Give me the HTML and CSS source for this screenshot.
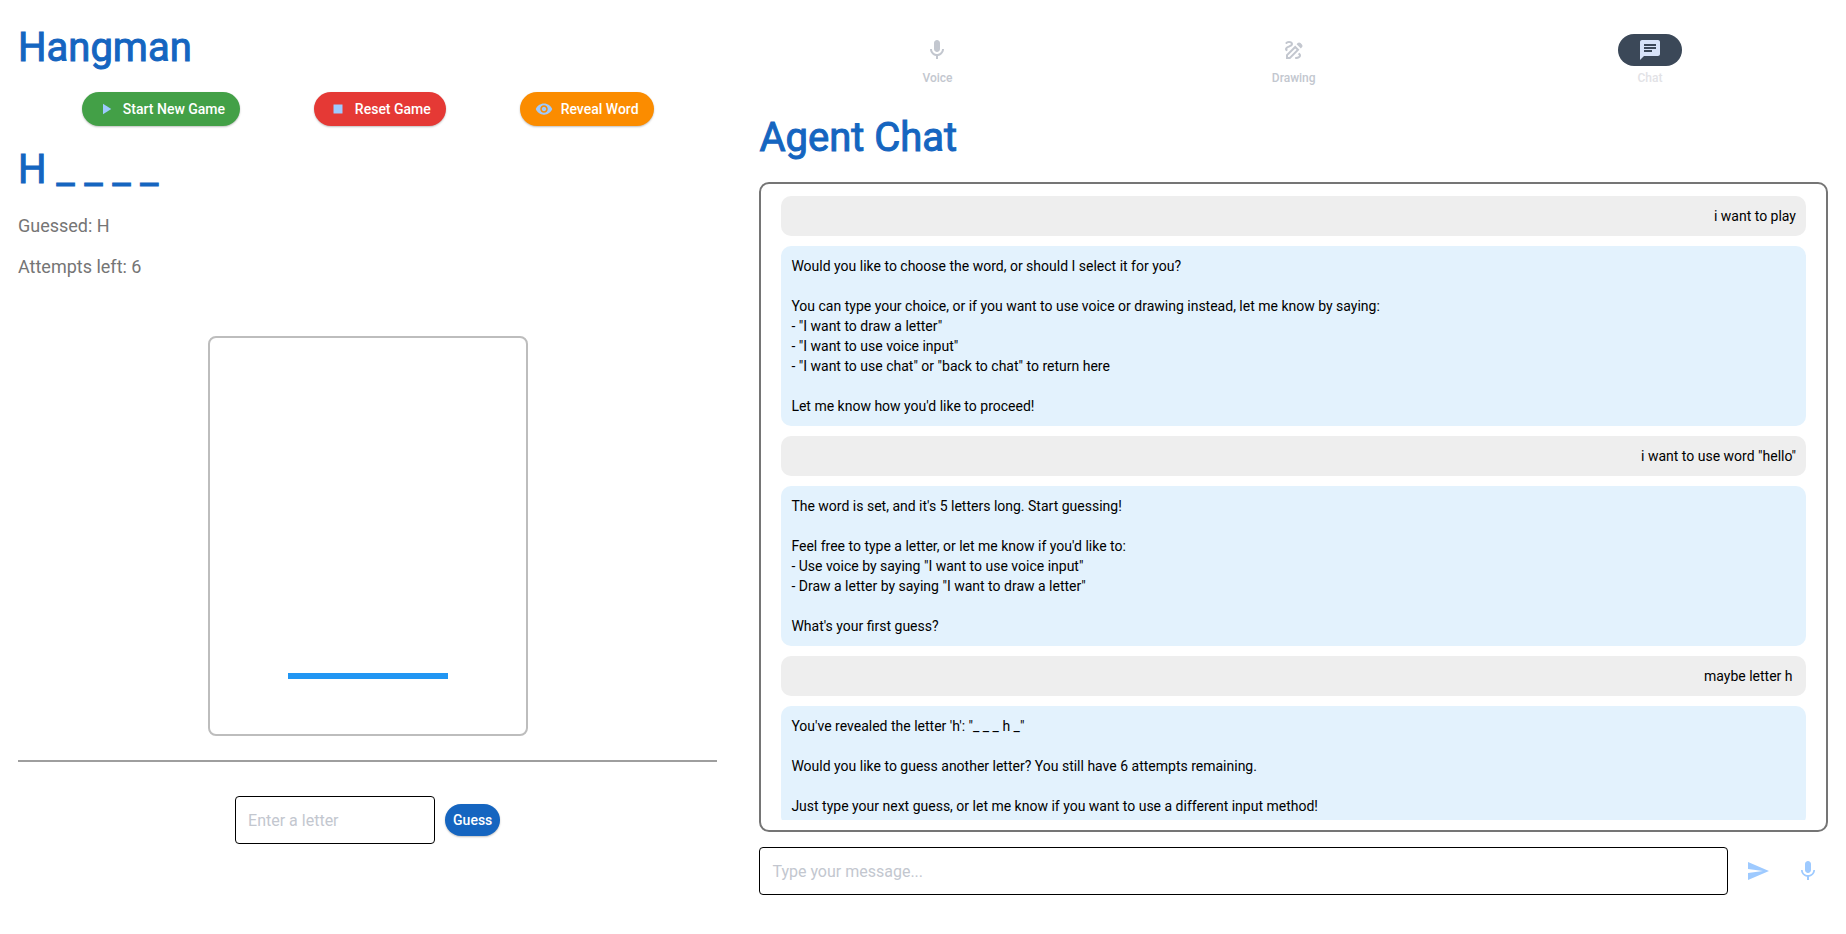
FILE: index.html
```html
<!DOCTYPE html>
<html lang="en">
<head>
<meta charset="utf-8">
<title>Hangman</title>
<link rel="stylesheet" href="styles.css">
</head>
<body>
<div class="layout">
  <main class="game">
    <h1 class="heading">Hangman</h1>
    <div class="actions">
      <button class="btn btn-start" type="button"><svg class="icon-small" viewBox="0 0 24 24" aria-hidden="true"><path d="M8 5v14l11-7z"/></svg>Start New Game</button>
      <button class="btn btn-reset" type="button"><svg class="icon-small" viewBox="0 0 24 24" aria-hidden="true"><path d="M6 6h12v12H6z"/></svg>Reset Game</button>
      <button class="btn btn-reveal" type="button"><svg class="icon-small" viewBox="0 0 24 24" aria-hidden="true"><path d="M12 4.500C7 4.500 2.730 7.610 1 12c1.730 4.390 6 7.500 11 7.500s9.270-3.110 11-7.500c-1.730-4.390-6-7.500-11-7.500zM12 17c-2.760 0-5-2.240-5-5s2.240-5 5-5 5 2.240 5 5-2.240 5-5 5zm0-8c-1.660 0-3 1.340-3 3s1.340 3 3 3 3-1.340 3-3-1.340-3-3-3z"/></svg>Reveal Word</button>
    </div>
    <p class="heading word">H _ _ _ _</p>
    <p class="status">Guessed: H</p>
    <p class="status">Attempts left: 6</p>
    <svg class="gallows" viewBox="0 0 316 396" role="img" aria-label="Gallows"><path d="M78 338h160" stroke="#2196f3" stroke-width="6"/></svg>
    <hr class="divider">
    <form class="guess">
      <input class="field guess-field" type="text" placeholder="Enter a letter" aria-label="Enter a letter">
      <button class="btn btn-guess" type="button">Guess</button>
    </form>
  </main>
  <section class="agent">
    <nav class="tabs">
      <button class="tab" type="button"><span class="tab-pill"><svg class="icon" viewBox="0 0 24 24" aria-hidden="true"><path d="M12 14c1.660 0 3-1.340 3-3V5c0-1.660-1.340-3-3-3S9 3.340 9 5v6c0 1.660 1.340 3 3 3zm5-3c0 2.760-2.240 5-5 5s-5-2.240-5-5H5c0 3.530 2.610 6.430 6 6.920V21h2v-3.080c3.390-.49 6-3.390 6-6.920h-2z"/></svg></span>Voice</button>
      <button class="tab" type="button"><span class="tab-pill"><svg class="icon" viewBox="0 0 24 24" aria-hidden="true"><path d="M18.850 10.390l1.060-1.060c.78-.78.78-2.050 0-2.830L18.500 5.090c-.78-.78-2.050-.78-2.830 0l-1.060 1.060 4.240 4.240zm-4.240 1.420L7.410 19H6v-1.410l7.190-7.190 1.420 1.410zm-1.420-4.250L4 16.760V21h4.240l9.190-9.190-4.240-4.250zM19 17.500c0 2.190-2.540 3.500-5 3.500-.55 0-1-.45-1-1s.45-1 1-1c1.540 0 3-.73 3-1.500 0-.47-.48-.87-1.230-1.200l1.480-1.480c1.070.63 1.750 1.470 1.750 2.680zM4.580 13.350C3.610 12.790 3 12.060 3 11c0-1.800 1.890-2.630 3.560-3.360C7.590 7.180 9 6.560 9 6c0-.41-.78-1-2-1-1.260 0-1.800.61-1.830.64-.35.41-.98.46-1.400.12-.41-.34-.49-.95-.15-1.380C3.730 4.240 4.760 3 7 3s4 1.320 4 3c0 1.870-1.930 2.720-3.640 3.470C6.420 9.880 5 10.500 5 11c0 .31.43.6 1.070.86l-1.490 1.490z"/></svg></span>Drawing</button>
      <button class="tab tab-active" type="button" aria-current="page"><span class="tab-pill"><svg class="icon" viewBox="0 0 24 24" aria-hidden="true"><path d="M20 2H4c-1.100 0-1.990.9-1.990 2L2 22l4-4h14c1.100 0 2-.9 2-2V4c0-1.100-.9-2-2-2zM6 9h12v2H6V9zm8 5H6v-2h8v2zm4-6H6V6h12v2z"/></svg></span>Chat</button>
    </nav>
    <h2 class="heading">Agent Chat</h2>
    <div class="chat">
      <div class="messages">
        <p class="message from-user">i want to play</p>
        <p class="message">Would you like to choose the word, or should I select it for you?

You can type your choice, or if you want to use voice or drawing instead, let me know by saying:
- "I want to draw a letter"
- "I want to use voice input"
- "I want to use chat" or "back to chat" to return here

Let me know how you'd like to proceed!</p>
        <p class="message from-user">i want to use word "hello"</p>
        <p class="message">The word is set, and it's 5 letters long. Start guessing!

Feel free to type a letter, or let me know if you'd like to:
- Use voice by saying "I want to use voice input"
- Draw a letter by saying "I want to draw a letter"

What's your first guess?</p>
        <p class="message from-user">maybe letter h </p>
        <p class="message">You've revealed the letter 'h': "_ _ _ h _"

Would you like to guess another letter? You still have 6 attempts remaining.

Just type your next guess, or let me know if you want to use a different input method!</p>
      </div>
    </div>
    <form class="composer">
      <input class="field message-field" type="text" placeholder="Type your message..." aria-label="Type your message">
      <button class="icon-btn" type="button" aria-label="Send"><svg class="icon" viewBox="0 0 24 24" aria-hidden="true"><path d="M2.010 21L23 12 2.010 3 2 10l15 2-15 2z"/></svg></button>
      <button class="icon-btn" type="button" aria-label="Record voice"><svg class="icon" viewBox="0 0 24 24" aria-hidden="true"><path d="M12 14c1.660 0 2.990-1.340 2.990-3L15 5c0-1.660-1.340-3-3-3S9 3.340 9 5v6c0 1.660 1.340 3 3 3zm5.300-3c0 3-2.540 5.100-5.300 5.100S6.700 14 6.700 11H5c0 3.410 2.720 6.230 6 6.720V21h2v-3.280c3.280-.48 6-3.300 6-6.720h-1.700z"/></svg></button>
    </form>
  </section>
</div>
</body>
</html>
```
FILE: styles.css
```css
* {
  box-sizing: border-box;
}

body {
  margin: 0;
  background: #fff;
  color: #1a1c1e;
  font-family: Roboto, "Liberation Sans", sans-serif;
  font-size: 14px;
  line-height: 20px;
}

h1, h2, p {
  margin: 0;
}

button, input {
  font: inherit;
}

button {
  border: 0;
  padding: 0;
  background: none;
  cursor: pointer;
}

svg {
  display: block;
  fill: currentColor;
}

.layout {
  display: grid;
  grid-template-columns: minmax(0, 2fr) minmax(0, 3fr);
  grid-template-rows: minmax(0, 1fr);
  height: 100vh;
}

.game {
  display: flex;
  flex-direction: column;
  padding: 22px 21px 0 18px;
}

.heading {
  color: #1565c0;
  font-size: 40px;
  font-weight: 400;
  line-height: 52px;
  -webkit-text-stroke: 1px currentColor;
}

.actions {
  display: flex;
  justify-content: space-evenly;
  gap: 10px;
  margin: 18px 0;
}

.btn {
  display: flex;
  align-items: center;
  gap: 8px;
  height: 34px;
  padding: 0 15px;
  border-radius: 17px;
  box-shadow: 0 1px 2px rgba(0, 0, 0, 0.25);
  color: #fff;
  font-weight: 500;
}

.btn-start {
  background: #43a047;
}

.btn-reset {
  background: #e53935;
}

.btn-reveal {
  background: #fb8c00;
}

.icon-small {
  width: 18px;
  height: 18px;
  color: #9ecaff;
}

.word {
  margin-bottom: 2px;
}

.status {
  margin-top: 15px;
  color: #757575;
  font-size: 18px;
  line-height: 26px;
}

.gallows {
  flex-shrink: 0;
  align-self: center;
  width: 320px;
  margin-top: 56px;
  border: 2px solid #bdbdbd;
  border-radius: 8px;
}

.divider {
  flex-shrink: 0;
  width: 100%;
  height: 2px;
  margin: 24px 0 34px;
  border: 0;
  background: #9e9e9e;
}

.guess {
  display: flex;
  justify-content: center;
  align-items: center;
  gap: 10px;
}

.field {
  height: 48px;
  padding: 0 12px;
  border: 1px solid #000;
  border-radius: 4px;
  background: transparent;
  font-size: 16px;
}

.field::placeholder {
  color: #c3c7cf;
  opacity: 1;
}

.guess-field {
  width: 200px;
}

.btn-guess {
  height: 32px;
  padding: 0 8px;
  background: #1565c0;
}

.agent {
  display: flex;
  flex-direction: column;
  padding: 34px 18px 39px 21px;
}

.tabs {
  display: grid;
  grid-template-columns: repeat(3, 1fr);
}

.tab {
  display: flex;
  flex-direction: column;
  align-items: center;
  gap: 4px;
  color: #c3c7cf;
  font-size: 12px;
  font-weight: 500;
  line-height: 16px;
}

.tab-pill {
  display: grid;
  place-items: center;
  width: 64px;
  height: 32px;
  border-radius: 16px;
}

.tab-active {
  color: #e2e2e6;
}

.tab-active .tab-pill {
  background: #3b4858;
  color: #d7e3f8;
}

.icon {
  width: 24px;
  height: 24px;
}

.agent > .heading {
  margin: 26px 0 18px;
}

.chat {
  display: flex;
  flex: 1;
  min-height: 0;
  padding: 12px 20px 10px;
  border: 2px solid #757575;
  border-radius: 10px;
}

.messages {
  flex: 1;
  overflow: auto;
  scrollbar-width: none;
}

.message {
  margin-bottom: 10px;
  padding: 10px;
  border-radius: 10px;
  background: #e3f2fd;
  color: #000;
  white-space: break-spaces;
}

.from-user {
  background: #eee;
  text-align: right;
}

.composer {
  display: flex;
  align-items: center;
  gap: 10px;
  margin-top: 15px;
}

.message-field {
  flex: 1;
}

.icon-btn {
  display: grid;
  place-items: center;
  width: 40px;
  height: 40px;
  color: #9ecaff;
}
```
